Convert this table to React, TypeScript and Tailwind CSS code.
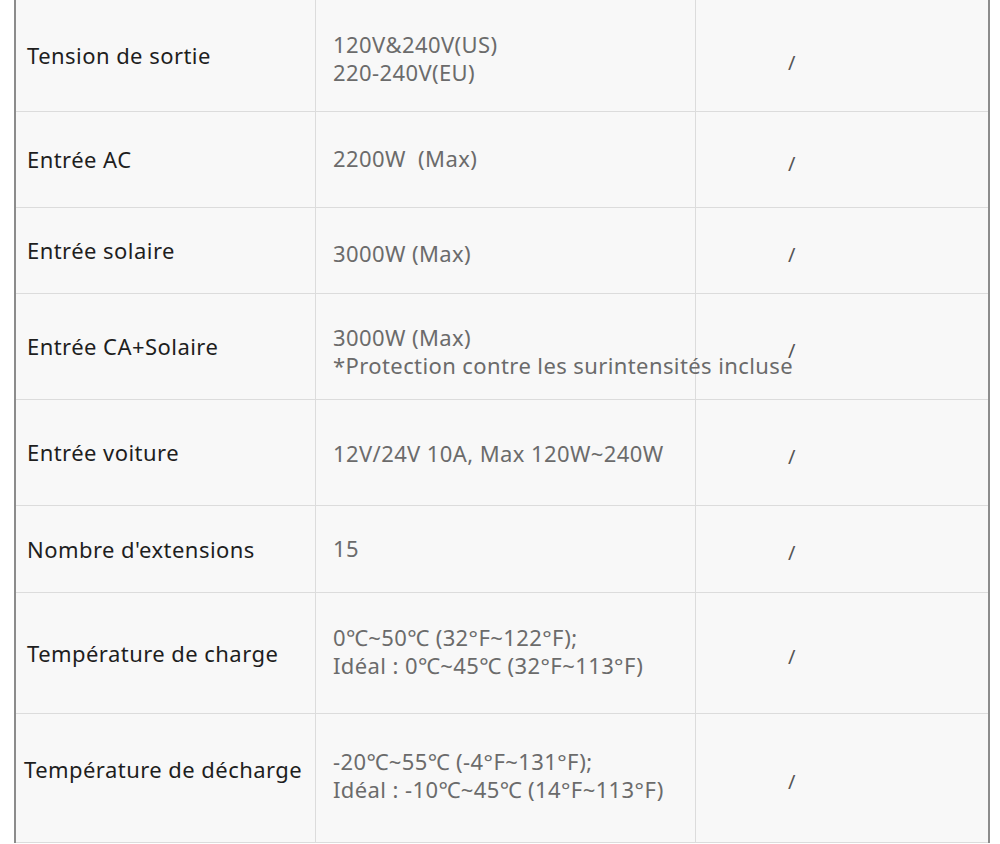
import React from "react";

type Row = { label: string; value: string[]; h: string; labelCls?: string; valCls: string; slashCls?: string };

const rows: Row[] = [
  { label: "Tension de sortie", value: ["120V&240V(US)", "220-240V(EU)"], h: "h-[112px]", valCls: "pt-[5px] leading-[26px]", slashCls: "pt-[14px]" },
  { label: "Entrée AC", value: ["2200W  (Max)"], h: "h-[96px]", valCls: "pb-[4px]" },
  { label: "Entrée solaire", value: ["3000W (Max)"], h: "h-[86px]", valCls: "pt-[4px]" },
  { label: "Entrée CA+Solaire", value: ["3000W (Max)", "*Protection contre les surintensités incluse"], h: "h-[106px]", valCls: "pt-[8px]" },
  { label: "Entrée voiture", value: ["12V/24V 10A, Max 120W~240W"], h: "h-[106px]", valCls: "pt-0" },
  { label: "Nombre d'extensions", value: ["15"], h: "h-[87px]", valCls: "pb-[2px]" },
  { label: "Température de charge", value: ["0℃~50℃ (32°F~122°F);", "Idéal : 0℃~45℃ (32°F~113°F)"], h: "h-[121px]", valCls: "pb-[4px]" },
  { label: "Température de décharge", value: ["-20℃~55℃ (-4°F~131°F);", "Idéal : -10℃~45℃ (14°F~113°F)"], h: "h-[129px]", labelCls: "pl-[8px] pb-[18px]", valCls: "pb-[7px]" },
];

export default function App() {
  return (
    <div className="w-[1000px] h-[844px] bg-white overflow-hidden" style={{ fontFamily: '"Noto Sans", "Open Sans", sans-serif' }}>
      <div className="ml-[14px] w-[976px] bg-[#f8f8f8] border-l-2 border-r-2 border-[#8c8c8c]">
        {rows.map((r, i) => (
          <div key={i} className={`flex ${r.h} border-b border-[#dcdcdc]`}>
            <div className={`w-[300px] shrink-0 flex items-center border-r border-[#dcdcdc] text-[22px] tracking-[0.45px] text-[#1e1e1e] ${r.labelCls ?? "pl-[11px]"}`}>
              {r.label}
            </div>
            <div className={`w-[380px] shrink-0 flex flex-col justify-center pl-[17px] border-r border-[#dcdcdc] text-[22px] tracking-[0.4px] leading-[28px] text-[#6b6b6b] whitespace-nowrap relative z-10 ${r.valCls}`}>
              {r.value.map((v, j) => (
                <div key={j} className="whitespace-pre">{v}</div>
              ))}
            </div>
            <div className={`flex-1 flex items-center pl-[92px] text-[20px] text-[#555] ${r.slashCls ?? "pt-[8px]"}`}>
              /
            </div>
          </div>
        ))}
      </div>
    </div>
  );
}
